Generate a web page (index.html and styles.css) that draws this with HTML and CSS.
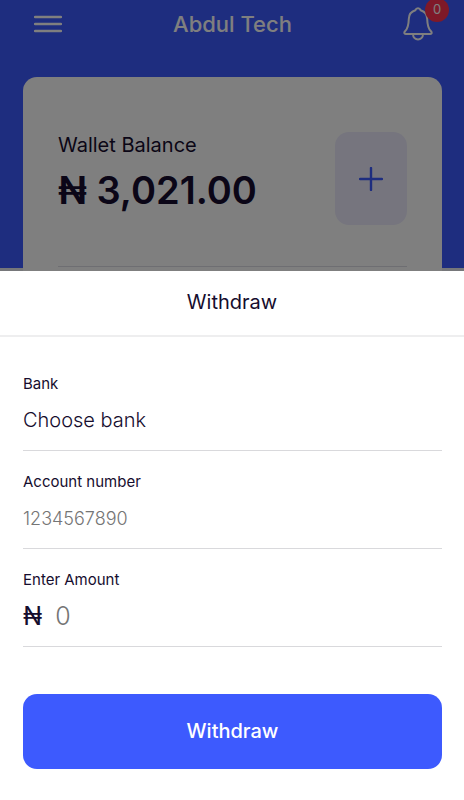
FILE: index.html
```html
<!DOCTYPE html>
<html lang="en">
<head>
<meta charset="utf-8">
<meta name="viewport" content="width=device-width, initial-scale=1">
<title>Withdraw</title>
<link rel="stylesheet" href="styles.css">
</head>
<body>
<div class="app">
  <header class="topbar">
    <button class="icon-button" type="button" aria-label="Menu">
      <svg width="28" height="28" viewBox="0 0 28 28" fill="none" stroke="currentColor" stroke-width="2.4" stroke-linecap="round"><path d="M1 7H27M1 14H27M1 21H27"/></svg>
    </button>
    <h1 class="title">Abdul Tech</h1>
    <button class="icon-button" type="button" aria-label="Notifications">
      <svg width="30" height="34" viewBox="0 0 30 34" fill="none" stroke="currentColor" stroke-width="2" stroke-linecap="round" stroke-linejoin="round"><path d="M15 1.3C13.3 1.3 12.7 2.2 12.3 3.3C8 4.6 5.9 8 5.8 12C5.6 18.5 5 21.3 2.2 24C.7 25.5 1.1 27 2.7 27H27.3C28.9 27 29.3 25.5 27.8 24C25 21.3 24.4 18.5 24.2 12C24.1 8 22 4.6 17.7 3.3C17.3 2.2 16.7 1.3 15 1.3Z"/><path d="M10 27C10 34.2 20 34.2 20 27"/></svg>
      <span class="badge">0</span>
    </button>
  </header>
  <main class="wallet">
    <div class="balance">
      <div>
        <p class="balance-label">Wallet Balance</p>
        <p class="balance-total">₦ 3,021.00</p>
      </div>
      <button class="add" type="button" aria-label="Add money">
        <svg width="24" height="24" viewBox="0 0 24 24" fill="none" stroke="currentColor" stroke-width="2.4" stroke-linecap="round"><path d="M12 1V23M1 12H23"/></svg>
      </button>
    </div>
  </main>
</div>
<div class="backdrop"></div>
<section class="sheet" role="dialog" aria-labelledby="sheet-title">
  <h2 class="sheet-title" id="sheet-title">Withdraw</h2>
  <form class="form">
    <div class="field">
      <label for="bank">Bank</label>
      <select class="control" id="bank"><option>Choose bank</option></select>
    </div>
    <div class="field">
      <label for="account">Account number</label>
      <input class="control number" id="account" type="text" inputmode="numeric" placeholder="1234567890">
    </div>
    <div class="field">
      <label for="amount">Enter Amount</label>
      <div class="amount">
        <span>₦</span>
        <input class="control large" id="amount" type="text" inputmode="decimal" placeholder="0">
      </div>
    </div>
    <button class="submit" type="button">Withdraw</button>
  </form>
</section>
</body>
</html>
```
FILE: styles.css
```css
* {
  box-sizing: border-box;
}

body {
  margin: 0;
  background: #edeef5;
  color: #160d2e;
  font-family: Inter, "Noto Sans", sans-serif;
}

h1, h2, p {
  margin: 0;
}

button, input, select {
  font: inherit;
  color: inherit;
}

.app {
  min-height: 100vh;
  padding: 0 22px 24px 23px;
  background: linear-gradient(#3d5afe, #3d5afe) top / 100% 268px no-repeat;
}

.topbar {
  display: flex;
  align-items: center;
  justify-content: space-between;
  height: 48px;
  padding: 0 9px 0 11px;
  color: #fff;
}

.title {
  font-size: 22px;
  font-weight: 500;
}

.icon-button {
  position: relative;
  display: flex;
  padding: 0;
  border: 0;
  background: none;
  color: #fff;
}

.badge {
  position: absolute;
  top: -9px;
  right: -16px;
  width: 24px;
  height: 24px;
  border-radius: 50%;
  background: #ff3250;
  font-size: 13px;
  line-height: 22px;
  text-align: center;
}

.wallet {
  margin-top: 29px;
  min-height: 320px;
  padding: 55px 35px 24px;
  border-radius: 14px;
  background: #fff;
}

.balance {
  display: flex;
  justify-content: space-between;
  padding-bottom: 41px;
  border-bottom: 1px solid #dcdce4;
}

.balance-label {
  font-size: 20px;
  line-height: 26px;
}

.balance-total {
  font-size: 38px;
  font-weight: 600;
  line-height: 64px;
}

.add {
  display: flex;
  align-items: center;
  justify-content: center;
  width: 72px;
  height: 93px;
  padding: 0;
  border: 0;
  border-radius: 14px;
  background: #ecebfc;
  color: #3d5afe;
}

.backdrop {
  position: fixed;
  inset: 0;
  background: rgb(0 0 0 / 50%);
}

.sheet {
  position: fixed;
  right: 0;
  bottom: 0;
  left: 0;
  background: #fff;
}

.sheet-title {
  padding: 16px 0 18px;
  border-bottom: 2px solid #eeeeef;
  font-size: 20px;
  font-weight: 400;
  line-height: 30px;
  text-align: center;
}

.form {
  display: flex;
  flex-direction: column;
  padding: 16px 22px 31px 23px;
}

.field {
  display: flex;
  flex-direction: column;
  padding: 21px 0 4px;
  border-bottom: 1px solid #d9d9dc;
}

.field label {
  font-size: 15px;
  line-height: 20px;
}

.control {
  width: 100%;
  height: 52px;
  padding: 0;
  border: 0;
  outline: 0;
  appearance: none;
  background: none;
  font-size: 20px;
  font-weight: 300;
}

.control::placeholder {
  color: #757575;
  opacity: 1;
}

.number {
  font-size: 18px;
}

.amount {
  display: flex;
  align-items: center;
  gap: 13px;
  font-size: 25px;
}

.large {
  font-size: 25px;
}

.submit {
  height: 75px;
  margin-top: 47px;
  padding: 0 0 2px;
  border: 0;
  border-radius: 14px;
  background: #3d5afe;
  color: #fff;
  font-size: 20px;
  font-weight: 500;
}
```
